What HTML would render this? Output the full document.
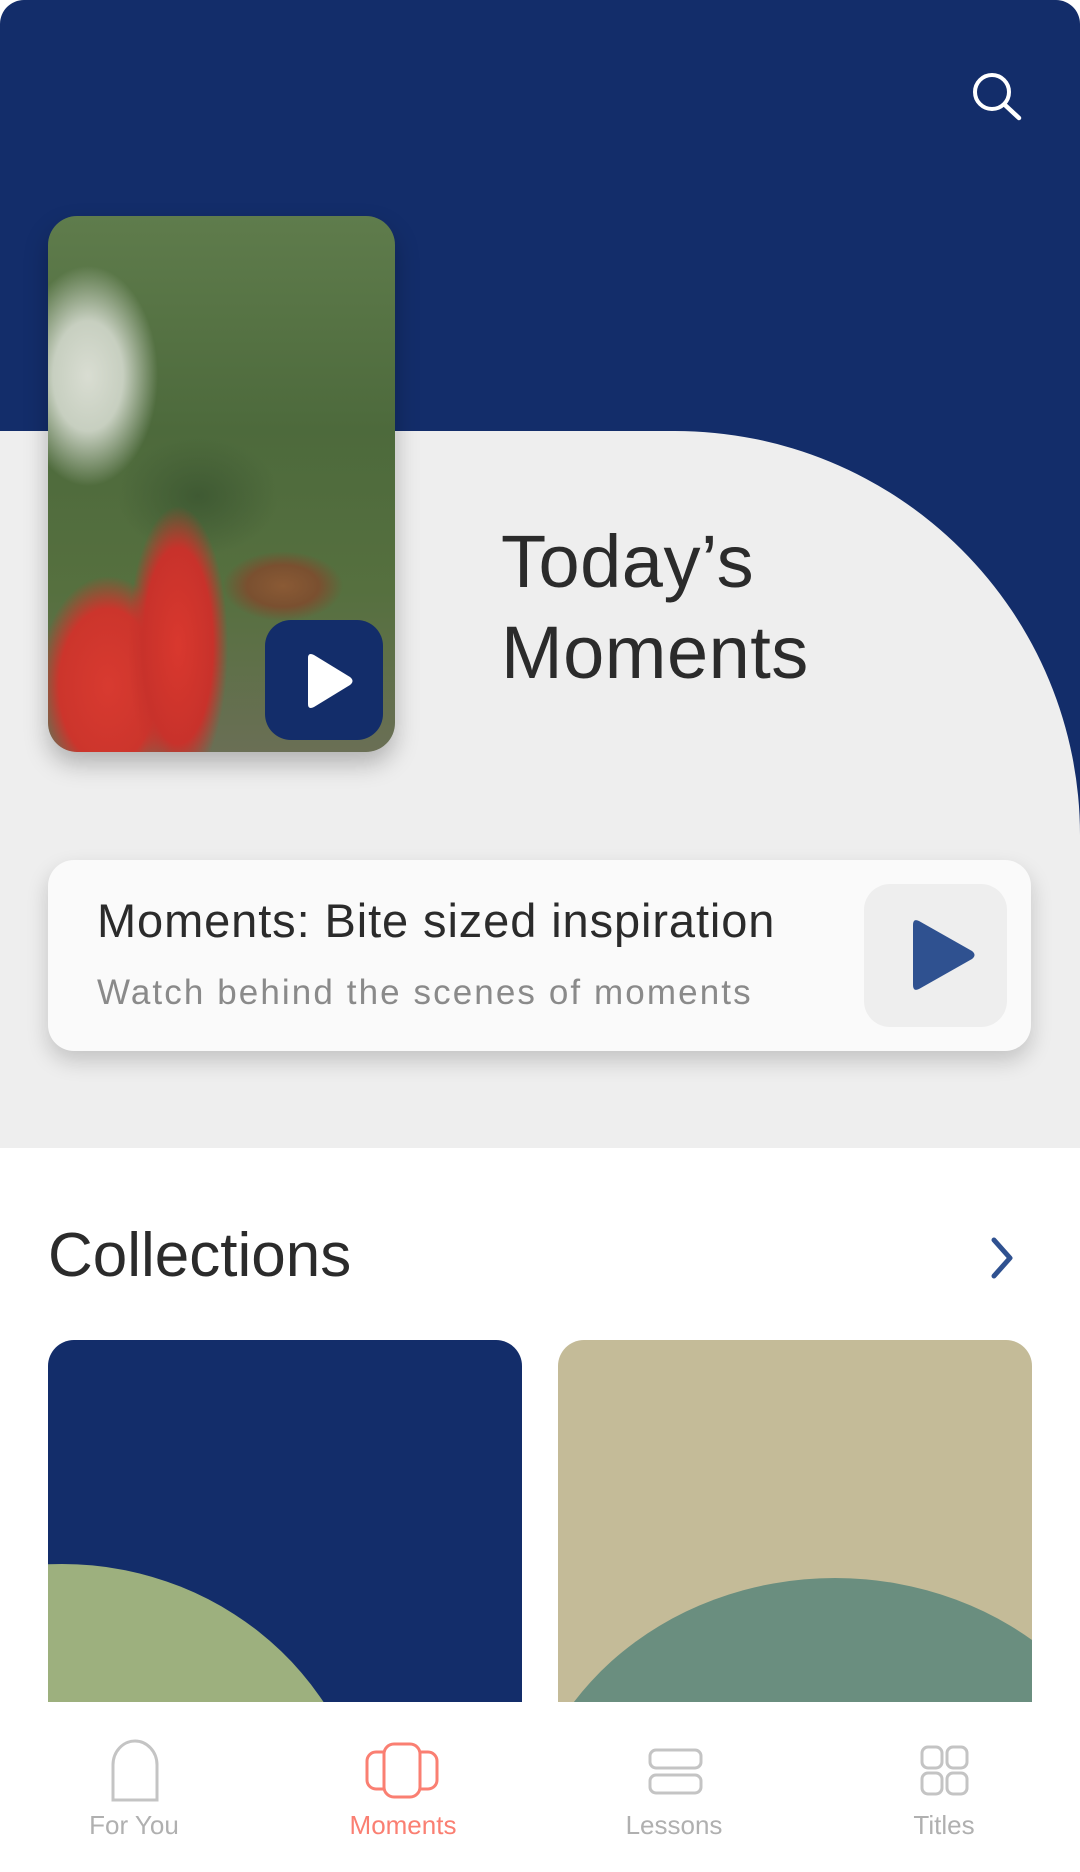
<!DOCTYPE html>
<html><head><meta charset="utf-8"><style>
*{margin:0;padding:0;box-sizing:border-box}
html,body{width:1080px;height:1872px;overflow:hidden}
body{position:relative;background:#fff;font-family:"Liberation Sans",sans-serif}
.abs{position:absolute}
</style></head><body>
<div class="abs" style="left:0;top:0;width:1080px;height:1148px;background:#eeeeee;border-radius:24px 24px 0 0;overflow:hidden">
<svg class="abs" style="left:0;top:0" width="1080" height="1148">
<path d="M0 0 H1080 V835 A405 404 0 0 0 675 431 H0 Z" fill="#132d6a"/>
</svg>
</div>
<svg class="abs" style="left:960px;top:60px" width="80" height="80">
<circle cx="32" cy="32" r="17" fill="none" stroke="#fff" stroke-width="4"/>
<line x1="45" y1="45" x2="59" y2="58" stroke="#fff" stroke-width="4.5" stroke-linecap="round"/>
</svg>
<div class="abs" style="left:48px;top:216px;width:347px;height:536px;border-radius:29px;overflow:hidden;box-shadow:0 12px 24px rgba(0,0,0,.25);background:
radial-gradient(ellipse 50px 140px at 130px 430px,#d9382e 0,#c8322b 70%,transparent 100%),
radial-gradient(ellipse 70px 110px at 60px 470px,#d83a30 0,#cc352c 70%,transparent 100%),
radial-gradient(ellipse 60px 35px at 235px 370px,#8a5a35 0,#7a5030 60%,transparent 100%),
radial-gradient(ellipse 70px 110px at 40px 160px,#d9ddd2 0,#c7cfc0 50%,transparent 100%),
radial-gradient(ellipse 80px 60px at 150px 280px,#3f5a33 0,transparent 100%),
linear-gradient(180deg,#5f7c4c 0%,#4d6a3c 40%,#56703f 70%,#6a6f55 100%)"></div>
<div class="abs" style="left:265px;top:620px;width:118px;height:120px;background:#132d6a;border-radius:26px"></div>
<svg class="abs" style="left:300px;top:652px" width="60" height="60"><path d="M8 6 Q8 0 14 3 L50 25 Q55 29 50 33 L14 55 Q8 58 8 52 Z" fill="#fff"/></svg>
<div class="abs" style="left:501px;top:516px;font-size:74px;line-height:91px;color:#2b2b2b;letter-spacing:0.5px">Today’s<br>Moments</div>
<div class="abs" style="left:48px;top:860px;width:983px;height:191px;background:#fafafa;border-radius:26px;box-shadow:0 10px 22px rgba(0,0,0,.18)"></div>
<div class="abs" style="left:97px;top:893px;font-size:47px;color:#2b2b2b;white-space:nowrap;letter-spacing:0.9px">Moments: Bite sized inspiration</div>
<div class="abs" style="left:97px;top:973px;font-size:35px;color:#8a8a8a;white-space:nowrap;letter-spacing:2.1px">Watch behind the scenes of moments</div>
<div class="abs" style="left:864px;top:884px;width:143px;height:143px;background:#eeeeee;border-radius:26px"></div>
<svg class="abs" style="left:910px;top:918px" width="70" height="76"><path d="M3 7 Q3 0 9 3 L62 33 Q67 37 62 41 L9 71 Q3 74 3 67 Z" fill="#2f5190"/></svg>
<div class="abs" style="left:48px;top:1220px;font-size:62px;color:#2b2b2b">Collections</div>
<svg class="abs" style="left:988px;top:1236px" width="30" height="44"><path d="M6 4 L22 22 L6 40" fill="none" stroke="#2f5190" stroke-width="5" stroke-linecap="round" stroke-linejoin="round"/></svg>
<div class="abs" style="left:48px;top:1340px;width:474px;height:362px;background:#132d6a;border-radius:26px 26px 0 0;overflow:hidden">
<div class="abs" style="left:-296px;top:224px;width:620px;height:596px;border-radius:50%;background:#9db07e"></div></div>
<div class="abs" style="left:558px;top:1340px;width:474px;height:362px;background:#c4bb98;border-radius:26px 26px 0 0;overflow:hidden">
<div class="abs" style="left:-39px;top:238px;width:632px;height:568px;border-radius:50%;background:#6a8e7f"></div></div>
<div class="abs" style="left:0;top:1702px;width:1080px;height:170px;background:#fff"></div>
<svg class="abs" style="left:0;top:1730px" width="1080" height="80" fill="none" stroke-width="3">
<path d="M113 70 V35 A22 24 0 0 1 157 35 V70 Z" stroke="#c4c4c4"/>
<rect x="367" y="22" width="70" height="37" rx="9" stroke="#fa7f72"/>
<rect x="384" y="14" width="36" height="53" rx="10" stroke="#fa7f72" fill="#fff"/>
<rect x="650" y="20" width="51" height="18" rx="6" stroke="#c4c4c4"/>
<rect x="650" y="45" width="51" height="18" rx="6" stroke="#c4c4c4"/>
<rect x="922" y="17" width="20" height="21" rx="6" stroke="#c4c4c4"/>
<rect x="947" y="17" width="20" height="21" rx="6" stroke="#c4c4c4"/>
<rect x="922" y="43" width="20" height="21" rx="6" stroke="#c4c4c4"/>
<rect x="947" y="43" width="20" height="21" rx="6" stroke="#c4c4c4"/>
</svg>
<div class="abs" style="left:34px;top:1810px;width:200px;text-align:center;font-size:26px;color:#b0b0b0">For You</div>
<div class="abs" style="left:303px;top:1810px;width:200px;text-align:center;font-size:26px;color:#fa7f72">Moments</div>
<div class="abs" style="left:574px;top:1810px;width:200px;text-align:center;font-size:26px;color:#b0b0b0">Lessons</div>
<div class="abs" style="left:844px;top:1810px;width:200px;text-align:center;font-size:26px;color:#b0b0b0">Titles</div>
</body></html>
